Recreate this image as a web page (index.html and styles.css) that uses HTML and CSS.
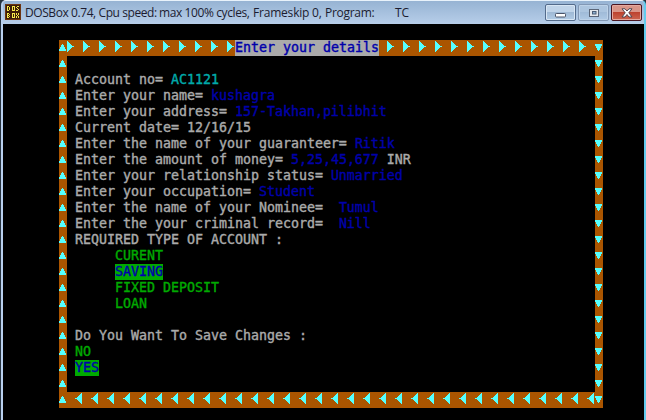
FILE: index.html
```
<!DOCTYPE html>
<html lang="en">
<head>
<meta charset="utf-8">
<title>DOSBox 0.74</title>
<link rel="stylesheet" href="styles.css">
</head>
<body>
<div class="window">
  <header class="titlebar">
    <svg class="app-icon" width="16" height="16" viewBox="0 0 16 16" shape-rendering="crispEdges">
      <rect width="16" height="16" fill="#6b3410"/><rect x="1" y="1" width="14" height="14" fill="#3c1c08"/>
      <path fill="none" stroke="#f5e84a" d="M2.500 2v5M3 2.500h1M3 6.500h1M4.500 3v3M7.500 2v5M8 2.500h1M8 6.500h1M9.500 2v5M12 2.500h2M11.500 3v1M12 4.500h1M13.500 5v1M11 6.500h2M2.500 9v5M3 9.500h1M3 11.500h1M3 13.500h1M4.500 10v1M4.500 12v1M7.500 9v5M8 9.500h1M8 13.500h1M9.500 9v5M11.500 9v2M13.500 9v2M12 11.500h1M11.500 12v2M13.500 12v2"/>
    </svg>
    <h1 class="caption"><span class="seg s1">DOSBox 0.74, Cpu speed:</span><span class="seg s2">max 100% cycles,</span><span class="seg s3">Frameskip</span><span class="seg s4">0,</span><span class="seg s5">Program:</span><span class="seg s6">TC</span></h1>
    <div class="controls">
      <span class="btn"><svg class="low" width="12" height="6" viewBox="0 0 12 6"><rect x=".5" y="1.500" width="10" height="3.500" rx=".8" fill="#fff" stroke="#4b5468"/></svg></span>
      <span class="btn faded"><svg width="12" height="10" viewBox="0 0 12 10"><rect x="1.500" y="1.500" width="9" height="7" fill="#e4e8ec" stroke="#5b6678"/><rect x="4.500" y="3.500" width="3.500" height="2.500" fill="#8cb0d0" stroke="#4b5c74"/></svg></span>
      <span class="btn close"><svg width="12" height="10" viewBox="0 0 12 10"><path d="M1 .8h3L6 3 8 .8h3L7.800 4.800 11 9H8L6 6.500 4 9H1l3.200-4.200z" fill="#fff" stroke="#53454f"/></svg></span>
    </div>
  </header>
  <main class="screen">
    <svg class="defs" width="0" height="0">
      <defs>
        <pattern id="right" width="16" height="16" patternUnits="userSpaceOnUse"><path fill="#5ff" d="M0 1h1v1h1v1h1v1h1v1h1v1h2v1H5v1H4v1H3v1H2v1H1v1H0z"/></pattern>
        <pattern id="left" width="16" height="16" patternUnits="userSpaceOnUse"><path fill="#5ff" d="M7 1H6v1H5v1H4v1H3v1H2v1H0v1h2v1h1v1h1v1h1v1h1v1h1z"/></pattern>
        <pattern id="up" width="8" height="16" patternUnits="userSpaceOnUse"><path fill="#5ff" d="M3 4h1v1h1v2h1v2h1v2H0V9h1V7h1V5h1z"/></pattern>
        <pattern id="down" width="8" height="16" patternUnits="userSpaceOnUse"><path fill="#5ff" d="M0 4h7v2H6v2H5v2H4v1H3v-1H2V8H1V6H0z"/></pattern>
      </defs>
    </svg>
    <section class="frame">
      <svg class="side" width="8" height="368" shape-rendering="crispEdges"><rect width="8" height="368" fill="url(#up)"/></svg>
      <div class="middle">
        <div class="border-row">
          <svg width="168" height="16" shape-rendering="crispEdges"><rect width="168" height="16" fill="url(#right)"/></svg>
          <h2 class="heading">Enter your details</h2>
          <svg class="after" width="208" height="16" shape-rendering="crispEdges"><rect width="208" height="16" fill="url(#right)"/></svg>
        </div>
        <div class="form">
          <p>Account no= <span class="cyan">AC1121</span></p>
          <p>Enter your name= <span class="blue">kushagra</span></p>
          <p>Enter your address= <span class="blue">157-Takhan,pilibhit</span></p>
          <p>Current date= 12/16/15</p>
          <p>Enter the name of your guaranteer= <span class="blue">Ritik</span></p>
          <p>Enter the amount of money= <span class="blue">5,25,45,677</span> INR</p>
          <p>Enter your relationship status= <span class="blue">Unmarried</span></p>
          <p>Enter your occupation= <span class="blue">Student</span></p>
          <p>Enter the name of your Nominee=  <span class="blue">Tumul</span></p>
          <p>Enter the your criminal record=  <span class="blue">Nill</span></p>
          <p>REQUIRED TYPE OF ACCOUNT :</p>
          <ul class="options"><li>CURENT</li><li class="selected">SAVING</li><li>FIXED DEPOSIT</li><li>LOAN</li></ul>
          <p>Do You Want To Save Changes :</p>
          <ul class="answers"><li>NO</li><li class="selected">YES</li></ul>
        </div>
        <div class="border-row bottom">
          <svg width="520" height="16" shape-rendering="crispEdges"><rect width="520" height="16" fill="url(#left)"/></svg>
        </div>
      </div>
      <svg class="side" width="8" height="368" shape-rendering="crispEdges"><rect width="8" height="368" fill="url(#down)"/></svg>
    </section>
  </main>
</div>
</body>
</html>
```
FILE: styles.css
```
* { box-sizing: border-box; margin: 0; padding: 0; }
body { width: 646px; height: 420px; overflow: hidden; background: #26333f; }
svg { display: block; flex: none; }
.window {
  height: 420px;
  margin-left: 1px;
  border-left: 2px solid #b9d0ee;
  border-right: 2px solid #62cbed;
  border-top: 1px solid #e8f2fb;
  border-radius: 5px 5px 0 0;
  background: #b9d0ee;
  overflow: hidden;
}
.titlebar {
  display: flex;
  height: 23px;
  padding-left: 2px;
  background: linear-gradient(#96b3d3, #b7cee9);
}
.app-icon { margin-top: 3px; }
.caption {
  display: flex;
  flex: 1;
  margin-left: 4px;
  font: 12px/24px "Open Sans", "Noto Sans", sans-serif;
  color: #1c1c30;
  white-space: nowrap;
}
.seg { flex: none; }
.s1 { width: 134px; letter-spacing: -0.42px; }
.s2 { width: 94px; letter-spacing: -0.4px; }
.s3 { width: 59px; letter-spacing: -0.2px; }
.s4 { width: 13px; }
.s5 { width: 70px; letter-spacing: -0.3px; }
.controls { display: flex; gap: 2px; margin: 3px 2px 0 0; }
.btn {
  display: flex;
  align-items: center;
  justify-content: center;
  width: 31px;
  height: 17px;
  border: 1px solid #536b8b;
  border-radius: 2px;
  box-shadow: inset 0 0 0 1px #d8e6f4;
  background: linear-gradient(#c0d4e9 45%, #9fb9d5 50%, #b2cce6);
}
.low { margin-top: 4px; }
.faded { border-color: #8298b5; box-shadow: inset 0 0 0 1px #bdd2e8; background: linear-gradient(#acc5df 45%, #a0bbd8 50%, #b0cae5); }
.close { border-color: #4a1420; box-shadow: inset 0 0 0 1px #e5a99f; background: linear-gradient(#d99588 45%, #bd4330 50%, #cc6651); }
.screen {
  height: 396px;
  padding: 16px 0 0 56px;
  background: #000;
  font: 13.29px/16px "DejaVu Sans Mono", monospace;
  color: #aaa;
  -webkit-text-stroke: 0.4px currentColor;
}
.defs { position: absolute; }
.frame { display: flex; width: 544px; height: 368px; }
.side { background: #a50; }
.middle { display: flex; flex-direction: column; width: 528px; }
.border-row { display: flex; height: 16px; background: #a50; }
.heading { width: 144px; font: inherit; background: #aaa; color: #00a; white-space: pre; }
.after { margin-left: 8px; }
.bottom { padding-left: 8px; }
.form { display: flex; flex-direction: column; flex: 1; padding: 16px 0 0 8px; }
.form p { height: 16px; white-space: pre; }
ul { display: flex; flex-direction: column; align-items: flex-start; list-style: none; color: #0a0; }
li { height: 16px; white-space: pre; }
.options { padding: 0 0 16px 40px; }
.selected { background: #0a0; color: #00a; }
.blue { color: #00a; }
.cyan { color: #0aa; }
```
